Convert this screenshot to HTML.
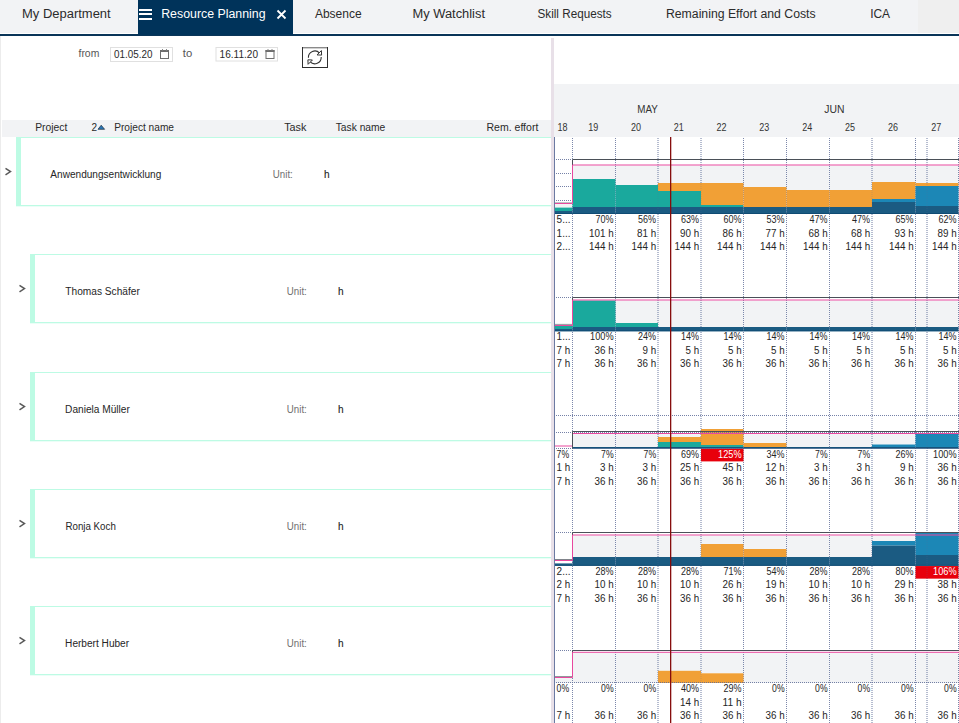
<!DOCTYPE html>
<html><head><meta charset="utf-8"><style>
html,body{margin:0;padding:0;background:#fff;width:959px;height:723px;overflow:hidden}
svg{display:block;font-family:"Liberation Sans", sans-serif}
</style></head><body>
<svg width="959" height="723" viewBox="0 0 959 723">
<rect x="0" y="0" width="959" height="33" fill="#f2f3f5" />
<rect x="918" y="0" width="41" height="33" fill="#efefef" />
<rect x="0" y="33" width="959" height="1" fill="#ffffff" />
<rect x="0" y="34" width="959" height="2" fill="#0a3558" />
<rect x="138" y="0" width="155" height="35" fill="#00335a" />
<text x="22.0" y="17.7" font-size="12" fill="#2b2b2b" textLength="88.7" lengthAdjust="spacingAndGlyphs" >My Department</text>
<text x="161.2" y="17.7" font-size="12" fill="#ffffff" textLength="104.4" lengthAdjust="spacingAndGlyphs" >Resource Planning</text>
<text x="314.9" y="17.7" font-size="12" fill="#2b2b2b" textLength="46.7" lengthAdjust="spacingAndGlyphs" >Absence</text>
<text x="412.5" y="17.7" font-size="12" fill="#2b2b2b" textLength="72.5" lengthAdjust="spacingAndGlyphs" >My Watchlist</text>
<text x="537.5" y="17.7" font-size="12" fill="#2b2b2b" textLength="74.1" lengthAdjust="spacingAndGlyphs" >Skill Requests</text>
<text x="665.95" y="17.7" font-size="12" fill="#2b2b2b" textLength="149.7" lengthAdjust="spacingAndGlyphs" >Remaining Effort and Costs</text>
<text x="870.2" y="17.7" font-size="12" fill="#2b2b2b" textLength="19.9" lengthAdjust="spacingAndGlyphs" >ICA</text>
<rect x="139" y="9" width="13" height="2" fill="#ffffff" />
<rect x="139" y="13" width="13" height="2" fill="#ffffff" />
<rect x="139" y="18" width="13" height="2" fill="#ffffff" />
<path d="M277.5 10.5 L285.5 18.5 M285.5 10.5 L277.5 18.5" stroke="#fff" stroke-width="1.8" fill="none"/>
<rect x="0" y="36" width="1" height="687" fill="#ececec" />
<text x="78.5" y="56.8" font-size="10.5" fill="#555" textLength="20.8" lengthAdjust="spacingAndGlyphs" >from</text>
<text x="182.8" y="56.8" font-size="10.5" fill="#555" textLength="9.4" lengthAdjust="spacingAndGlyphs" >to</text>
<rect x="110.5" y="47.5" width="62" height="14" fill="#fff" stroke="#e0e0e0" stroke-width="1"/>
<text x="114.1" y="57.6" font-size="10.5" fill="#2a2a2a" textLength="38.4" lengthAdjust="spacingAndGlyphs" >01.05.20</text>
<rect x="160.5" y="50.5" width="8" height="8" fill="none" stroke="#6e6e6e" stroke-width="1"/>
<rect x="160.0" y="50" width="9" height="2" fill="#6e6e6e" />
<rect x="162.0" y="49" width="1" height="1.5" fill="#8a8a8a" />
<rect x="166.0" y="49" width="1" height="1.5" fill="#8a8a8a" />
<rect x="216" y="47.5" width="61.5" height="13.5" fill="#fff" stroke="#e0e0e0" stroke-width="1"/>
<text x="219.6" y="57.6" font-size="10.5" fill="#2a2a2a" textLength="38.4" lengthAdjust="spacingAndGlyphs" >16.11.20</text>
<rect x="266.0" y="50.5" width="8" height="8" fill="none" stroke="#6e6e6e" stroke-width="1"/>
<rect x="265.5" y="50" width="9" height="2" fill="#6e6e6e" />
<rect x="267.5" y="49" width="1" height="1.5" fill="#8a8a8a" />
<rect x="271.5" y="49" width="1" height="1.5" fill="#8a8a8a" />
<rect x="302.5" y="47.5" width="25" height="20" fill="#fff" stroke="#2e2e2e" stroke-width="1"/>
<rect x="303" y="47" width="24" height="1.4" fill="#8a8a8a" />
<path d="M308.41 57.73 A6.4 6.4 0 0 1 319.56 53.12" stroke="#333" stroke-width="1.1" fill="none"/>
<path d="M321.19 57.07 A6.4 6.4 0 0 1 310.04 61.68" stroke="#333" stroke-width="1.1" fill="none"/>
<path d="M321.4 50.6 L321.6 55.1 L317.0 54.9 Z" stroke="#333" stroke-width="1" fill="#fff" stroke-linejoin="round"/>
<path d="M308.1 64.3 L307.9 59.8 L312.4 60.0 Z" stroke="#333" stroke-width="1" fill="#fff" stroke-linejoin="round"/>
<rect x="2" y="120" width="549" height="17" fill="#f2f3f5" />
<text x="35.2" y="130.8" font-size="10" fill="#2a2a2a" textLength="32.2" lengthAdjust="spacingAndGlyphs" >Project</text>
<text x="91.4" y="130.8" font-size="10" fill="#2a2a2a" >2</text>
<path d="M98 129.3 L101.2 125.2 L104.6 129.3 Z" fill="#2a78b8" stroke="#1a2a3a" stroke-width="0.7" stroke-linejoin="round"/>
<text x="114.2" y="130.8" font-size="10" fill="#2a2a2a" textLength="59.8" lengthAdjust="spacingAndGlyphs" >Project name</text>
<text x="284.2" y="130.8" font-size="10" fill="#2a2a2a" textLength="22.2" lengthAdjust="spacingAndGlyphs" >Task</text>
<text x="335.7" y="130.8" font-size="10" fill="#2a2a2a" textLength="49.6" lengthAdjust="spacingAndGlyphs" >Task name</text>
<text x="486.5" y="130.8" font-size="10" fill="#2a2a2a" textLength="51.8" lengthAdjust="spacingAndGlyphs" >Rem. effort</text>
<rect x="16" y="137" width="535" height="1" fill="#bdfbe4" />
<rect x="16" y="205" width="535" height="1.3" fill="#bdfbe4" />
<rect x="16" y="137" width="5" height="69" fill="#bdfbe4" />
<path d="M5.5 168.3 L10.5 171.6 L5.5 174.9" stroke="#5a5a5a" stroke-width="1.5" fill="none" stroke-linejoin="miter"/>
<text x="50.3" y="178.0" font-size="10" fill="#262626" textLength="111.0" lengthAdjust="spacingAndGlyphs" >Anwendungsentwicklung</text>
<text x="272.8" y="178.0" font-size="10" fill="#707070" textLength="20.0" lengthAdjust="spacingAndGlyphs" >Unit:</text>
<text x="323.9" y="178.0" font-size="10" fill="#1e1e1e" textLength="5.6" lengthAdjust="spacingAndGlyphs" stroke="#1e1e1e" stroke-width="0.12">h</text>
<rect x="30" y="254" width="521" height="1" fill="#bdfbe4" />
<rect x="30" y="322" width="521" height="1.3" fill="#bdfbe4" />
<rect x="30" y="254" width="5" height="69" fill="#bdfbe4" />
<path d="M19.5 285.3 L24.5 288.6 L19.5 291.9" stroke="#5a5a5a" stroke-width="1.5" fill="none" stroke-linejoin="miter"/>
<text x="65.3" y="295.0" font-size="10" fill="#262626" textLength="74.5" lengthAdjust="spacingAndGlyphs" >Thomas Schäfer</text>
<text x="286.8" y="295.0" font-size="10" fill="#707070" textLength="20.0" lengthAdjust="spacingAndGlyphs" >Unit:</text>
<text x="337.9" y="295.0" font-size="10" fill="#1e1e1e" textLength="5.6" lengthAdjust="spacingAndGlyphs" stroke="#1e1e1e" stroke-width="0.12">h</text>
<rect x="30" y="372" width="521" height="1" fill="#bdfbe4" />
<rect x="30" y="440" width="521" height="1.3" fill="#bdfbe4" />
<rect x="30" y="372" width="5" height="69" fill="#bdfbe4" />
<path d="M19.5 403.3 L24.5 406.6 L19.5 409.9" stroke="#5a5a5a" stroke-width="1.5" fill="none" stroke-linejoin="miter"/>
<text x="65.1" y="413.0" font-size="10" fill="#262626" textLength="64.8" lengthAdjust="spacingAndGlyphs" >Daniela Müller</text>
<text x="286.8" y="413.0" font-size="10" fill="#707070" textLength="20.0" lengthAdjust="spacingAndGlyphs" >Unit:</text>
<text x="337.9" y="413.0" font-size="10" fill="#1e1e1e" textLength="5.6" lengthAdjust="spacingAndGlyphs" stroke="#1e1e1e" stroke-width="0.12">h</text>
<rect x="30" y="489" width="521" height="1" fill="#bdfbe4" />
<rect x="30" y="557" width="521" height="1.3" fill="#bdfbe4" />
<rect x="30" y="489" width="5" height="69" fill="#bdfbe4" />
<path d="M19.5 520.3 L24.5 523.6 L19.5 526.9" stroke="#5a5a5a" stroke-width="1.5" fill="none" stroke-linejoin="miter"/>
<text x="65.5" y="530.0" font-size="10" fill="#262626" textLength="50.3" lengthAdjust="spacingAndGlyphs" >Ronja Koch</text>
<text x="286.8" y="530.0" font-size="10" fill="#707070" textLength="20.0" lengthAdjust="spacingAndGlyphs" >Unit:</text>
<text x="337.9" y="530.0" font-size="10" fill="#1e1e1e" textLength="5.6" lengthAdjust="spacingAndGlyphs" stroke="#1e1e1e" stroke-width="0.12">h</text>
<rect x="30" y="606" width="521" height="1" fill="#bdfbe4" />
<rect x="30" y="674" width="521" height="1.3" fill="#bdfbe4" />
<rect x="30" y="606" width="5" height="69" fill="#bdfbe4" />
<path d="M19.5 637.3 L24.5 640.6 L19.5 643.9" stroke="#5a5a5a" stroke-width="1.5" fill="none" stroke-linejoin="miter"/>
<text x="65.1" y="647.0" font-size="10" fill="#262626" textLength="64.0" lengthAdjust="spacingAndGlyphs" >Herbert Huber</text>
<text x="286.8" y="647.0" font-size="10" fill="#707070" textLength="20.0" lengthAdjust="spacingAndGlyphs" >Unit:</text>
<text x="337.9" y="647.0" font-size="10" fill="#1e1e1e" textLength="5.6" lengthAdjust="spacingAndGlyphs" stroke="#1e1e1e" stroke-width="0.12">h</text>
<rect x="551" y="38" width="3" height="685" fill="#e8e0e8" />
<rect x="554" y="84" width="405" height="53" fill="#f2f3f5" />
<text x="637.3" y="113.2" font-size="10" fill="#333" textLength="20.6" lengthAdjust="spacingAndGlyphs" >MAY</text>
<text x="824.3" y="113.2" font-size="10" fill="#333" textLength="20.2" lengthAdjust="spacingAndGlyphs" >JUN</text>
<text x="562.5" y="130.8" font-size="10" fill="#333" text-anchor="middle" textLength="10" lengthAdjust="spacingAndGlyphs" >18</text>
<text x="593.3" y="130.8" font-size="10" fill="#333" text-anchor="middle" textLength="10" lengthAdjust="spacingAndGlyphs" >19</text>
<text x="636.0" y="130.8" font-size="10" fill="#333" text-anchor="middle" textLength="10" lengthAdjust="spacingAndGlyphs" >20</text>
<text x="678.8" y="130.8" font-size="10" fill="#333" text-anchor="middle" textLength="10" lengthAdjust="spacingAndGlyphs" >21</text>
<text x="721.5" y="130.8" font-size="10" fill="#333" text-anchor="middle" textLength="10" lengthAdjust="spacingAndGlyphs" >22</text>
<text x="764.3" y="130.8" font-size="10" fill="#333" text-anchor="middle" textLength="10" lengthAdjust="spacingAndGlyphs" >23</text>
<text x="807.3" y="130.8" font-size="10" fill="#333" text-anchor="middle" textLength="10" lengthAdjust="spacingAndGlyphs" >24</text>
<text x="850.0" y="130.8" font-size="10" fill="#333" text-anchor="middle" textLength="10" lengthAdjust="spacingAndGlyphs" >25</text>
<text x="893.0" y="130.8" font-size="10" fill="#333" text-anchor="middle" textLength="10" lengthAdjust="spacingAndGlyphs" >26</text>
<text x="936.3" y="130.8" font-size="10" fill="#333" text-anchor="middle" textLength="10" lengthAdjust="spacingAndGlyphs" >27</text>
<rect x="555" y="204" width="17.5" height="3.6" fill="#f2f3f5" />
<rect x="572.5" y="165.5" width="43.0" height="13.5" fill="#f2f3f5" />
<rect x="615.5" y="165.5" width="42.5" height="19.5" fill="#f2f3f5" />
<rect x="658.0" y="165.5" width="43.0" height="17.5" fill="#f2f3f5" />
<rect x="701.0" y="165.5" width="42.5" height="17.5" fill="#f2f3f5" />
<rect x="743.5" y="165.5" width="43.0" height="21.5" fill="#f2f3f5" />
<rect x="786.5" y="165.5" width="43.0" height="24.5" fill="#f2f3f5" />
<rect x="829.5" y="165.5" width="42.5" height="24.5" fill="#f2f3f5" />
<rect x="872.0" y="165.5" width="43.5" height="16.5" fill="#f2f3f5" />
<rect x="915.5" y="165.5" width="43.0" height="17.5" fill="#f2f3f5" />
<rect x="615.5" y="300.5" width="42.5" height="22.5" fill="#f2f3f5" />
<rect x="658.0" y="300.5" width="43.0" height="26.5" fill="#f2f3f5" />
<rect x="701.0" y="300.5" width="42.5" height="26.5" fill="#f2f3f5" />
<rect x="743.5" y="300.5" width="43.0" height="26.5" fill="#f2f3f5" />
<rect x="786.5" y="300.5" width="43.0" height="26.5" fill="#f2f3f5" />
<rect x="829.5" y="300.5" width="42.5" height="26.5" fill="#f2f3f5" />
<rect x="872.0" y="300.5" width="43.5" height="26.5" fill="#f2f3f5" />
<rect x="915.5" y="300.5" width="43.0" height="26.5" fill="#f2f3f5" />
<rect x="572.5" y="434" width="43.0" height="13" fill="#f2f3f5" />
<rect x="615.5" y="434" width="42.5" height="13" fill="#f2f3f5" />
<rect x="658.0" y="434" width="43.0" height="3" fill="#f2f3f5" />
<rect x="743.5" y="434" width="43.0" height="9" fill="#f2f3f5" />
<rect x="786.5" y="434" width="43.0" height="13" fill="#f2f3f5" />
<rect x="829.5" y="434" width="42.5" height="13" fill="#f2f3f5" />
<rect x="872.0" y="434" width="43.5" height="10.5" fill="#f2f3f5" />
<rect x="572.5" y="535.5" width="43.0" height="21.5" fill="#f2f3f5" />
<rect x="615.5" y="535.5" width="42.5" height="21.5" fill="#f2f3f5" />
<rect x="658.0" y="535.5" width="43.0" height="21.5" fill="#f2f3f5" />
<rect x="701.0" y="535.5" width="42.5" height="8.5" fill="#f2f3f5" />
<rect x="743.5" y="535.5" width="43.0" height="13.5" fill="#f2f3f5" />
<rect x="786.5" y="535.5" width="43.0" height="21.5" fill="#f2f3f5" />
<rect x="829.5" y="535.5" width="42.5" height="21.5" fill="#f2f3f5" />
<rect x="872.0" y="535.5" width="43.5" height="5.5" fill="#f2f3f5" />
<rect x="555" y="678" width="17.5" height="5.0" fill="#f2f3f5" />
<rect x="572.5" y="652.8" width="43.0" height="30.2" fill="#f2f3f5" />
<rect x="615.5" y="652.8" width="42.5" height="30.2" fill="#f2f3f5" />
<rect x="658.0" y="652.8" width="43.0" height="18.0" fill="#f2f3f5" />
<rect x="701.0" y="652.8" width="42.5" height="20.5" fill="#f2f3f5" />
<rect x="743.5" y="652.8" width="43.0" height="30.2" fill="#f2f3f5" />
<rect x="786.5" y="652.8" width="43.0" height="30.2" fill="#f2f3f5" />
<rect x="829.5" y="652.8" width="42.5" height="30.2" fill="#f2f3f5" />
<rect x="872.0" y="652.8" width="43.5" height="30.2" fill="#f2f3f5" />
<rect x="915.5" y="652.8" width="43.0" height="30.2" fill="#f2f3f5" />
<g stroke="#5d6c98" stroke-width="1" stroke-dasharray="1 1" opacity="0.75"><line x1="572.5" y1="138" x2="572.5" y2="723"/><line x1="615.5" y1="138" x2="615.5" y2="723"/><line x1="658.0" y1="138" x2="658.0" y2="723"/><line x1="701.0" y1="138" x2="701.0" y2="723"/><line x1="743.5" y1="138" x2="743.5" y2="723"/><line x1="786.5" y1="138" x2="786.5" y2="723"/><line x1="829.5" y1="138" x2="829.5" y2="723"/><line x1="872.0" y1="138" x2="872.0" y2="723"/><line x1="915.5" y1="138" x2="915.5" y2="723"/><line x1="958.5" y1="138" x2="958.5" y2="723"/><line x1="927.0" y1="138" x2="927.0" y2="723"/></g>
<rect x="555" y="207.6" width="17.5" height="3.4" fill="#1aa99d" />
<rect x="555" y="211" width="17.5" height="3.0" fill="#1b5b82" />
<rect x="555" y="213.1" width="17.5" height="0.9" fill="#0f4a72" />
<rect x="572.5" y="179" width="43.0" height="28" fill="#1aa99d" />
<rect x="572.5" y="207" width="43.0" height="7.0" fill="#1b5b82" />
<rect x="572.5" y="213.1" width="43.0" height="0.9" fill="#0f4a72" />
<rect x="615.5" y="185" width="42.5" height="22" fill="#1aa99d" />
<rect x="615.5" y="207" width="42.5" height="7.0" fill="#1b5b82" />
<rect x="615.5" y="213.1" width="42.5" height="0.9" fill="#0f4a72" />
<rect x="658.0" y="183" width="43.0" height="8" fill="#f1a036" />
<rect x="658.0" y="191" width="43.0" height="16" fill="#1aa99d" />
<rect x="658.0" y="207" width="43.0" height="7.0" fill="#1b5b82" />
<rect x="658.0" y="213.1" width="43.0" height="0.9" fill="#0f4a72" />
<rect x="701.0" y="183" width="42.5" height="22" fill="#f1a036" />
<rect x="701.0" y="205" width="42.5" height="2" fill="#1aa99d" />
<rect x="701.0" y="207" width="42.5" height="7.0" fill="#1b5b82" />
<rect x="701.0" y="213.1" width="42.5" height="0.9" fill="#0f4a72" />
<rect x="743.5" y="187" width="43.0" height="20" fill="#f1a036" />
<rect x="743.5" y="207" width="43.0" height="7.0" fill="#1b5b82" />
<rect x="743.5" y="213.1" width="43.0" height="0.9" fill="#0f4a72" />
<rect x="786.5" y="190" width="43.0" height="17" fill="#f1a036" />
<rect x="786.5" y="207" width="43.0" height="7.0" fill="#1b5b82" />
<rect x="786.5" y="213.1" width="43.0" height="0.9" fill="#0f4a72" />
<rect x="829.5" y="190" width="42.5" height="17" fill="#f1a036" />
<rect x="829.5" y="207" width="42.5" height="7.0" fill="#1b5b82" />
<rect x="829.5" y="213.1" width="42.5" height="0.9" fill="#0f4a72" />
<rect x="872.0" y="182" width="43.5" height="17" fill="#f1a036" />
<rect x="872.0" y="199" width="43.5" height="3" fill="#1c87b6" />
<rect x="872.0" y="202" width="43.5" height="12.0" fill="#1b5b82" />
<rect x="872.0" y="213.1" width="43.5" height="0.9" fill="#0f4a72" />
<rect x="915.5" y="183" width="43.0" height="3" fill="#f1a036" />
<rect x="915.5" y="186" width="43.0" height="20" fill="#1c87b6" />
<rect x="915.5" y="206" width="43.0" height="8.0" fill="#1b5b82" />
<rect x="915.5" y="213.1" width="43.0" height="0.9" fill="#0f4a72" />
<rect x="555" y="326" width="17.5" height="3" fill="#1aa99d" />
<rect x="555" y="329" width="17.5" height="2.25" fill="#1b5b82" />
<rect x="555" y="330.35" width="17.5" height="0.9" fill="#0f4a72" />
<rect x="572.5" y="300.5" width="43.0" height="26.5" fill="#1aa99d" />
<rect x="572.5" y="327" width="43.0" height="4.25" fill="#1b5b82" />
<rect x="572.5" y="330.35" width="43.0" height="0.9" fill="#0f4a72" />
<rect x="615.5" y="323" width="42.5" height="4" fill="#1aa99d" />
<rect x="615.5" y="327" width="42.5" height="4.25" fill="#1b5b82" />
<rect x="615.5" y="330.35" width="42.5" height="0.9" fill="#0f4a72" />
<rect x="658.0" y="327" width="43.0" height="4.25" fill="#1b5b82" />
<rect x="658.0" y="330.35" width="43.0" height="0.9" fill="#0f4a72" />
<rect x="701.0" y="327" width="42.5" height="4.25" fill="#1b5b82" />
<rect x="701.0" y="330.35" width="42.5" height="0.9" fill="#0f4a72" />
<rect x="743.5" y="327" width="43.0" height="4.25" fill="#1b5b82" />
<rect x="743.5" y="330.35" width="43.0" height="0.9" fill="#0f4a72" />
<rect x="786.5" y="327" width="43.0" height="4.25" fill="#1b5b82" />
<rect x="786.5" y="330.35" width="43.0" height="0.9" fill="#0f4a72" />
<rect x="829.5" y="327" width="42.5" height="4.25" fill="#1b5b82" />
<rect x="829.5" y="330.35" width="42.5" height="0.9" fill="#0f4a72" />
<rect x="872.0" y="327" width="43.5" height="4.25" fill="#1b5b82" />
<rect x="872.0" y="330.35" width="43.5" height="0.9" fill="#0f4a72" />
<rect x="915.5" y="327" width="43.0" height="4.25" fill="#1b5b82" />
<rect x="915.5" y="330.35" width="43.0" height="0.9" fill="#0f4a72" />
<rect x="572.5" y="447" width="43.0" height="1.5" fill="#1b5b82" />
<rect x="572.5" y="447.6" width="43.0" height="0.9" fill="#0f4a72" />
<rect x="615.5" y="447" width="42.5" height="1.5" fill="#1b5b82" />
<rect x="615.5" y="447.6" width="42.5" height="0.9" fill="#0f4a72" />
<rect x="658.0" y="437" width="43.0" height="5" fill="#f1a036" />
<rect x="658.0" y="442" width="43.0" height="5" fill="#1aa99d" />
<rect x="658.0" y="447" width="43.0" height="1.5" fill="#1b5b82" />
<rect x="658.0" y="447.6" width="43.0" height="0.9" fill="#0f4a72" />
<rect x="701.0" y="429" width="42.5" height="16" fill="#f1a036" />
<rect x="701.0" y="445" width="42.5" height="2" fill="#1aa99d" />
<rect x="701.0" y="447" width="42.5" height="1.5" fill="#1b5b82" />
<rect x="701.0" y="447.6" width="42.5" height="0.9" fill="#0f4a72" />
<rect x="743.5" y="443" width="43.0" height="4" fill="#f1a036" />
<rect x="743.5" y="447" width="43.0" height="1.5" fill="#1b5b82" />
<rect x="743.5" y="447.6" width="43.0" height="0.9" fill="#0f4a72" />
<rect x="786.5" y="447" width="43.0" height="1.5" fill="#1b5b82" />
<rect x="786.5" y="447.6" width="43.0" height="0.9" fill="#0f4a72" />
<rect x="829.5" y="447" width="42.5" height="1.5" fill="#1b5b82" />
<rect x="829.5" y="447.6" width="42.5" height="0.9" fill="#0f4a72" />
<rect x="872.0" y="444.5" width="43.5" height="2.5" fill="#1c87b6" />
<rect x="872.0" y="447" width="43.5" height="1.5" fill="#1b5b82" />
<rect x="872.0" y="447.6" width="43.5" height="0.9" fill="#0f4a72" />
<rect x="915.5" y="433.5" width="43.0" height="13.5" fill="#1c87b6" />
<rect x="915.5" y="447" width="43.0" height="1.5" fill="#1b5b82" />
<rect x="915.5" y="447.6" width="43.0" height="0.9" fill="#0f4a72" />
<rect x="701.0" y="448.8" width="42.5" height="12.6" fill="#e8000c" />
<rect x="555" y="563.4" width="17.5" height="2.35" fill="#1b5b82" />
<rect x="555" y="564.85" width="17.5" height="0.9" fill="#0f4a72" />
<rect x="572.5" y="557" width="43.0" height="8.75" fill="#1b5b82" />
<rect x="572.5" y="564.85" width="43.0" height="0.9" fill="#0f4a72" />
<rect x="615.5" y="557" width="42.5" height="8.75" fill="#1b5b82" />
<rect x="615.5" y="564.85" width="42.5" height="0.9" fill="#0f4a72" />
<rect x="658.0" y="557" width="43.0" height="8.75" fill="#1b5b82" />
<rect x="658.0" y="564.85" width="43.0" height="0.9" fill="#0f4a72" />
<rect x="701.0" y="544" width="42.5" height="13" fill="#f1a036" />
<rect x="701.0" y="557" width="42.5" height="8.75" fill="#1b5b82" />
<rect x="701.0" y="564.85" width="42.5" height="0.9" fill="#0f4a72" />
<rect x="743.5" y="549" width="43.0" height="8" fill="#f1a036" />
<rect x="743.5" y="557" width="43.0" height="8.75" fill="#1b5b82" />
<rect x="743.5" y="564.85" width="43.0" height="0.9" fill="#0f4a72" />
<rect x="786.5" y="557" width="43.0" height="8.75" fill="#1b5b82" />
<rect x="786.5" y="564.85" width="43.0" height="0.9" fill="#0f4a72" />
<rect x="829.5" y="557" width="42.5" height="8.75" fill="#1b5b82" />
<rect x="829.5" y="564.85" width="42.5" height="0.9" fill="#0f4a72" />
<rect x="872.0" y="541" width="43.5" height="4.6" fill="#1c87b6" />
<rect x="872.0" y="545.6" width="43.5" height="20.15" fill="#1b5b82" />
<rect x="872.0" y="564.85" width="43.5" height="0.9" fill="#0f4a72" />
<rect x="915.5" y="532.7" width="43.0" height="22.3" fill="#1c87b6" />
<rect x="915.5" y="555" width="43.0" height="10.75" fill="#1b5b82" />
<rect x="915.5" y="564.85" width="43.0" height="0.9" fill="#0f4a72" />
<rect x="915.5" y="566.05" width="43.0" height="12.6" fill="#e8000c" />
<rect x="658.0" y="670.8" width="43.0" height="12.2" fill="#f1a036" />
<rect x="701.0" y="673.3" width="42.5" height="9.7" fill="#f1a036" />
<g stroke="#5d6c98" stroke-width="1" stroke-dasharray="1 1" opacity="0.22"><line x1="572.5" y1="138" x2="572.5" y2="723"/><line x1="615.5" y1="138" x2="615.5" y2="723"/><line x1="658.0" y1="138" x2="658.0" y2="723"/><line x1="701.0" y1="138" x2="701.0" y2="723"/><line x1="743.5" y1="138" x2="743.5" y2="723"/><line x1="786.5" y1="138" x2="786.5" y2="723"/><line x1="829.5" y1="138" x2="829.5" y2="723"/><line x1="872.0" y1="138" x2="872.0" y2="723"/><line x1="915.5" y1="138" x2="915.5" y2="723"/><line x1="958.5" y1="138" x2="958.5" y2="723"/><line x1="927.0" y1="138" x2="927.0" y2="723"/></g>
<line x1="556" y1="200.5" x2="572.0" y2="200.5" stroke="#5d6c98" stroke-width="1" stroke-dasharray="1 1" opacity="0.85"/>
<line x1="556" y1="186.5" x2="572.0" y2="186.5" stroke="#5d6c98" stroke-width="1" stroke-dasharray="1 1" opacity="0.85"/>
<line x1="556" y1="173.5" x2="572.0" y2="173.5" stroke="#5d6c98" stroke-width="1" stroke-dasharray="1 1" opacity="0.85"/>
<line x1="556" y1="159.5" x2="572.0" y2="159.5" stroke="#5d6c98" stroke-width="1" stroke-dasharray="1 1" opacity="0.85"/>
<path d="M555 202.5 H572.5" stroke="#4a5058" stroke-width="1" fill="none" opacity="0.35"/>
<path d="M572.5 202.5 V159.5 H959" stroke="#4a5058" stroke-width="1" fill="none"/>
<path d="M555 203.5 H572.5 V165.0 H959" stroke="#e8489e" stroke-width="1" fill="none"/>
<text x="556.6" y="223.0" font-size="10" fill="#262626" >5...</text>
<text x="556.6" y="236.5" font-size="10" fill="#262626" >1...</text>
<text x="556.6" y="250.0" font-size="10" fill="#262626" >2...</text>
<text x="613.6" y="223.0" font-size="10" fill="#262626" text-anchor="end" textLength="18.0" lengthAdjust="spacingAndGlyphs" >70%</text>
<text x="613.6" y="236.5" font-size="10" fill="#262626" text-anchor="end" textLength="24.6" lengthAdjust="spacingAndGlyphs" >101 h</text>
<text x="613.6" y="250.0" font-size="10" fill="#262626" text-anchor="end" textLength="24.6" lengthAdjust="spacingAndGlyphs" >144 h</text>
<text x="656.1" y="223.0" font-size="10" fill="#262626" text-anchor="end" textLength="18.0" lengthAdjust="spacingAndGlyphs" >56%</text>
<text x="656.1" y="236.5" font-size="10" fill="#262626" text-anchor="end" textLength="19.1" lengthAdjust="spacingAndGlyphs" >81 h</text>
<text x="656.1" y="250.0" font-size="10" fill="#262626" text-anchor="end" textLength="24.6" lengthAdjust="spacingAndGlyphs" >144 h</text>
<text x="699.1" y="223.0" font-size="10" fill="#262626" text-anchor="end" textLength="18.0" lengthAdjust="spacingAndGlyphs" >63%</text>
<text x="699.1" y="236.5" font-size="10" fill="#262626" text-anchor="end" textLength="19.1" lengthAdjust="spacingAndGlyphs" >90 h</text>
<text x="699.1" y="250.0" font-size="10" fill="#262626" text-anchor="end" textLength="24.6" lengthAdjust="spacingAndGlyphs" >144 h</text>
<text x="741.6" y="223.0" font-size="10" fill="#262626" text-anchor="end" textLength="18.0" lengthAdjust="spacingAndGlyphs" >60%</text>
<text x="741.6" y="236.5" font-size="10" fill="#262626" text-anchor="end" textLength="19.1" lengthAdjust="spacingAndGlyphs" >86 h</text>
<text x="741.6" y="250.0" font-size="10" fill="#262626" text-anchor="end" textLength="24.6" lengthAdjust="spacingAndGlyphs" >144 h</text>
<text x="784.6" y="223.0" font-size="10" fill="#262626" text-anchor="end" textLength="18.0" lengthAdjust="spacingAndGlyphs" >53%</text>
<text x="784.6" y="236.5" font-size="10" fill="#262626" text-anchor="end" textLength="19.1" lengthAdjust="spacingAndGlyphs" >77 h</text>
<text x="784.6" y="250.0" font-size="10" fill="#262626" text-anchor="end" textLength="24.6" lengthAdjust="spacingAndGlyphs" >144 h</text>
<text x="827.6" y="223.0" font-size="10" fill="#262626" text-anchor="end" textLength="18.0" lengthAdjust="spacingAndGlyphs" >47%</text>
<text x="827.6" y="236.5" font-size="10" fill="#262626" text-anchor="end" textLength="19.1" lengthAdjust="spacingAndGlyphs" >68 h</text>
<text x="827.6" y="250.0" font-size="10" fill="#262626" text-anchor="end" textLength="24.6" lengthAdjust="spacingAndGlyphs" >144 h</text>
<text x="870.1" y="223.0" font-size="10" fill="#262626" text-anchor="end" textLength="18.0" lengthAdjust="spacingAndGlyphs" >47%</text>
<text x="870.1" y="236.5" font-size="10" fill="#262626" text-anchor="end" textLength="19.1" lengthAdjust="spacingAndGlyphs" >68 h</text>
<text x="870.1" y="250.0" font-size="10" fill="#262626" text-anchor="end" textLength="24.6" lengthAdjust="spacingAndGlyphs" >144 h</text>
<text x="913.6" y="223.0" font-size="10" fill="#262626" text-anchor="end" textLength="18.0" lengthAdjust="spacingAndGlyphs" >65%</text>
<text x="913.6" y="236.5" font-size="10" fill="#262626" text-anchor="end" textLength="19.1" lengthAdjust="spacingAndGlyphs" >93 h</text>
<text x="913.6" y="250.0" font-size="10" fill="#262626" text-anchor="end" textLength="24.6" lengthAdjust="spacingAndGlyphs" >144 h</text>
<text x="956.6" y="223.0" font-size="10" fill="#262626" text-anchor="end" textLength="18.0" lengthAdjust="spacingAndGlyphs" >62%</text>
<text x="956.6" y="236.5" font-size="10" fill="#262626" text-anchor="end" textLength="19.1" lengthAdjust="spacingAndGlyphs" >89 h</text>
<text x="956.6" y="250.0" font-size="10" fill="#262626" text-anchor="end" textLength="24.6" lengthAdjust="spacingAndGlyphs" >144 h</text>
<line x1="556" y1="297.5" x2="572.0" y2="297.5" stroke="#5d6c98" stroke-width="1" stroke-dasharray="1 1" opacity="0.85"/>
<path d="M555 324.4 H572.5" stroke="#4a5058" stroke-width="1" fill="none" opacity="0.6"/>
<path d="M572.5 324.4 V297.5 H959" stroke="#4a5058" stroke-width="1" fill="none"/>
<path d="M555 325.5 H572.5 V300.0 H959" stroke="#e8489e" stroke-width="1" fill="none"/>
<text x="556.6" y="340.25" font-size="10" fill="#262626" >1...</text>
<text x="556.6" y="353.75" font-size="10" fill="#262626" textLength="13.6" lengthAdjust="spacingAndGlyphs" >7 h</text>
<text x="556.6" y="367.25" font-size="10" fill="#262626" textLength="13.6" lengthAdjust="spacingAndGlyphs" >7 h</text>
<text x="613.6" y="340.25" font-size="10" fill="#262626" text-anchor="end" textLength="23.5" lengthAdjust="spacingAndGlyphs" >100%</text>
<text x="613.6" y="353.75" font-size="10" fill="#262626" text-anchor="end" textLength="19.1" lengthAdjust="spacingAndGlyphs" >36 h</text>
<text x="613.6" y="367.25" font-size="10" fill="#262626" text-anchor="end" textLength="19.1" lengthAdjust="spacingAndGlyphs" >36 h</text>
<text x="656.1" y="340.25" font-size="10" fill="#262626" text-anchor="end" textLength="18.0" lengthAdjust="spacingAndGlyphs" >24%</text>
<text x="656.1" y="353.75" font-size="10" fill="#262626" text-anchor="end" textLength="13.6" lengthAdjust="spacingAndGlyphs" >9 h</text>
<text x="656.1" y="367.25" font-size="10" fill="#262626" text-anchor="end" textLength="19.1" lengthAdjust="spacingAndGlyphs" >36 h</text>
<text x="699.1" y="340.25" font-size="10" fill="#262626" text-anchor="end" textLength="18.0" lengthAdjust="spacingAndGlyphs" >14%</text>
<text x="699.1" y="353.75" font-size="10" fill="#262626" text-anchor="end" textLength="13.6" lengthAdjust="spacingAndGlyphs" >5 h</text>
<text x="699.1" y="367.25" font-size="10" fill="#262626" text-anchor="end" textLength="19.1" lengthAdjust="spacingAndGlyphs" >36 h</text>
<text x="741.6" y="340.25" font-size="10" fill="#262626" text-anchor="end" textLength="18.0" lengthAdjust="spacingAndGlyphs" >14%</text>
<text x="741.6" y="353.75" font-size="10" fill="#262626" text-anchor="end" textLength="13.6" lengthAdjust="spacingAndGlyphs" >5 h</text>
<text x="741.6" y="367.25" font-size="10" fill="#262626" text-anchor="end" textLength="19.1" lengthAdjust="spacingAndGlyphs" >36 h</text>
<text x="784.6" y="340.25" font-size="10" fill="#262626" text-anchor="end" textLength="18.0" lengthAdjust="spacingAndGlyphs" >14%</text>
<text x="784.6" y="353.75" font-size="10" fill="#262626" text-anchor="end" textLength="13.6" lengthAdjust="spacingAndGlyphs" >5 h</text>
<text x="784.6" y="367.25" font-size="10" fill="#262626" text-anchor="end" textLength="19.1" lengthAdjust="spacingAndGlyphs" >36 h</text>
<text x="827.6" y="340.25" font-size="10" fill="#262626" text-anchor="end" textLength="18.0" lengthAdjust="spacingAndGlyphs" >14%</text>
<text x="827.6" y="353.75" font-size="10" fill="#262626" text-anchor="end" textLength="13.6" lengthAdjust="spacingAndGlyphs" >5 h</text>
<text x="827.6" y="367.25" font-size="10" fill="#262626" text-anchor="end" textLength="19.1" lengthAdjust="spacingAndGlyphs" >36 h</text>
<text x="870.1" y="340.25" font-size="10" fill="#262626" text-anchor="end" textLength="18.0" lengthAdjust="spacingAndGlyphs" >14%</text>
<text x="870.1" y="353.75" font-size="10" fill="#262626" text-anchor="end" textLength="13.6" lengthAdjust="spacingAndGlyphs" >5 h</text>
<text x="870.1" y="367.25" font-size="10" fill="#262626" text-anchor="end" textLength="19.1" lengthAdjust="spacingAndGlyphs" >36 h</text>
<text x="913.6" y="340.25" font-size="10" fill="#262626" text-anchor="end" textLength="18.0" lengthAdjust="spacingAndGlyphs" >14%</text>
<text x="913.6" y="353.75" font-size="10" fill="#262626" text-anchor="end" textLength="13.6" lengthAdjust="spacingAndGlyphs" >5 h</text>
<text x="913.6" y="367.25" font-size="10" fill="#262626" text-anchor="end" textLength="19.1" lengthAdjust="spacingAndGlyphs" >36 h</text>
<text x="956.6" y="340.25" font-size="10" fill="#262626" text-anchor="end" textLength="18.0" lengthAdjust="spacingAndGlyphs" >14%</text>
<text x="956.6" y="353.75" font-size="10" fill="#262626" text-anchor="end" textLength="13.6" lengthAdjust="spacingAndGlyphs" >5 h</text>
<text x="956.6" y="367.25" font-size="10" fill="#262626" text-anchor="end" textLength="19.1" lengthAdjust="spacingAndGlyphs" >36 h</text>
<line x1="556" y1="415.5" x2="959" y2="415.5" stroke="#5d6c98" stroke-width="1" stroke-dasharray="1 1" opacity="0.85"/>
<line x1="556" y1="432.5" x2="959" y2="432.5" stroke="#5d6c98" stroke-width="1" stroke-dasharray="1 1" opacity="0.85"/>
<line x1="556" y1="448.5" x2="959" y2="448.5" stroke="#5d6c98" stroke-width="1" stroke-dasharray="1 1" opacity="0.85"/>
<path d="M572.5 446.0 V431.5 H959" stroke="#4a5058" stroke-width="1" fill="none"/>
<path d="M555 446.0 H572.5 V433.5 H959" stroke="#e8489e" stroke-width="1" fill="none"/>
<path d="M572.5 448.5 V431.5" stroke="#4a5058" stroke-width="1" fill="none"/>
<text x="556.6" y="457.5" font-size="10" fill="#262626" textLength="12.5" lengthAdjust="spacingAndGlyphs" >7%</text>
<text x="556.6" y="471.0" font-size="10" fill="#262626" textLength="13.6" lengthAdjust="spacingAndGlyphs" >1 h</text>
<text x="556.6" y="484.5" font-size="10" fill="#262626" textLength="13.6" lengthAdjust="spacingAndGlyphs" >7 h</text>
<text x="613.6" y="457.5" font-size="10" fill="#262626" text-anchor="end" textLength="12.5" lengthAdjust="spacingAndGlyphs" >7%</text>
<text x="613.6" y="471.0" font-size="10" fill="#262626" text-anchor="end" textLength="13.6" lengthAdjust="spacingAndGlyphs" >3 h</text>
<text x="613.6" y="484.5" font-size="10" fill="#262626" text-anchor="end" textLength="19.1" lengthAdjust="spacingAndGlyphs" >36 h</text>
<text x="656.1" y="457.5" font-size="10" fill="#262626" text-anchor="end" textLength="12.5" lengthAdjust="spacingAndGlyphs" >7%</text>
<text x="656.1" y="471.0" font-size="10" fill="#262626" text-anchor="end" textLength="13.6" lengthAdjust="spacingAndGlyphs" >3 h</text>
<text x="656.1" y="484.5" font-size="10" fill="#262626" text-anchor="end" textLength="19.1" lengthAdjust="spacingAndGlyphs" >36 h</text>
<text x="699.1" y="457.5" font-size="10" fill="#262626" text-anchor="end" textLength="18.0" lengthAdjust="spacingAndGlyphs" >69%</text>
<text x="699.1" y="471.0" font-size="10" fill="#262626" text-anchor="end" textLength="19.1" lengthAdjust="spacingAndGlyphs" >25 h</text>
<text x="699.1" y="484.5" font-size="10" fill="#262626" text-anchor="end" textLength="19.1" lengthAdjust="spacingAndGlyphs" >36 h</text>
<text x="741.6" y="457.5" font-size="10" fill="#ffffff" text-anchor="end" textLength="23.5" lengthAdjust="spacingAndGlyphs" >125%</text>
<text x="741.6" y="471.0" font-size="10" fill="#262626" text-anchor="end" textLength="19.1" lengthAdjust="spacingAndGlyphs" >45 h</text>
<text x="741.6" y="484.5" font-size="10" fill="#262626" text-anchor="end" textLength="19.1" lengthAdjust="spacingAndGlyphs" >36 h</text>
<text x="784.6" y="457.5" font-size="10" fill="#262626" text-anchor="end" textLength="18.0" lengthAdjust="spacingAndGlyphs" >34%</text>
<text x="784.6" y="471.0" font-size="10" fill="#262626" text-anchor="end" textLength="19.1" lengthAdjust="spacingAndGlyphs" >12 h</text>
<text x="784.6" y="484.5" font-size="10" fill="#262626" text-anchor="end" textLength="19.1" lengthAdjust="spacingAndGlyphs" >36 h</text>
<text x="827.6" y="457.5" font-size="10" fill="#262626" text-anchor="end" textLength="12.5" lengthAdjust="spacingAndGlyphs" >7%</text>
<text x="827.6" y="471.0" font-size="10" fill="#262626" text-anchor="end" textLength="13.6" lengthAdjust="spacingAndGlyphs" >3 h</text>
<text x="827.6" y="484.5" font-size="10" fill="#262626" text-anchor="end" textLength="19.1" lengthAdjust="spacingAndGlyphs" >36 h</text>
<text x="870.1" y="457.5" font-size="10" fill="#262626" text-anchor="end" textLength="12.5" lengthAdjust="spacingAndGlyphs" >7%</text>
<text x="870.1" y="471.0" font-size="10" fill="#262626" text-anchor="end" textLength="13.6" lengthAdjust="spacingAndGlyphs" >3 h</text>
<text x="870.1" y="484.5" font-size="10" fill="#262626" text-anchor="end" textLength="19.1" lengthAdjust="spacingAndGlyphs" >36 h</text>
<text x="913.6" y="457.5" font-size="10" fill="#262626" text-anchor="end" textLength="18.0" lengthAdjust="spacingAndGlyphs" >26%</text>
<text x="913.6" y="471.0" font-size="10" fill="#262626" text-anchor="end" textLength="13.6" lengthAdjust="spacingAndGlyphs" >9 h</text>
<text x="913.6" y="484.5" font-size="10" fill="#262626" text-anchor="end" textLength="19.1" lengthAdjust="spacingAndGlyphs" >36 h</text>
<text x="956.6" y="457.5" font-size="10" fill="#262626" text-anchor="end" textLength="23.5" lengthAdjust="spacingAndGlyphs" >100%</text>
<text x="956.6" y="471.0" font-size="10" fill="#262626" text-anchor="end" textLength="19.1" lengthAdjust="spacingAndGlyphs" >36 h</text>
<text x="956.6" y="484.5" font-size="10" fill="#262626" text-anchor="end" textLength="19.1" lengthAdjust="spacingAndGlyphs" >36 h</text>
<line x1="556" y1="532.5" x2="572.0" y2="532.5" stroke="#5d6c98" stroke-width="1" stroke-dasharray="1 1" opacity="0.85"/>
<path d="M555 559.5 H572.5" stroke="#4a5058" stroke-width="1" fill="none" opacity="0.7"/>
<path d="M572.5 559.5 V532.5 H959" stroke="#4a5058" stroke-width="1" fill="none"/>
<path d="M555 560.5 H572.5 V535.0 H959" stroke="#e8489e" stroke-width="1" fill="none"/>
<text x="556.6" y="574.75" font-size="10" fill="#262626" >2...</text>
<text x="556.6" y="588.25" font-size="10" fill="#262626" textLength="13.6" lengthAdjust="spacingAndGlyphs" >2 h</text>
<text x="556.6" y="601.75" font-size="10" fill="#262626" textLength="13.6" lengthAdjust="spacingAndGlyphs" >7 h</text>
<text x="613.6" y="574.75" font-size="10" fill="#262626" text-anchor="end" textLength="18.0" lengthAdjust="spacingAndGlyphs" >28%</text>
<text x="613.6" y="588.25" font-size="10" fill="#262626" text-anchor="end" textLength="19.1" lengthAdjust="spacingAndGlyphs" >10 h</text>
<text x="613.6" y="601.75" font-size="10" fill="#262626" text-anchor="end" textLength="19.1" lengthAdjust="spacingAndGlyphs" >36 h</text>
<text x="656.1" y="574.75" font-size="10" fill="#262626" text-anchor="end" textLength="18.0" lengthAdjust="spacingAndGlyphs" >28%</text>
<text x="656.1" y="588.25" font-size="10" fill="#262626" text-anchor="end" textLength="19.1" lengthAdjust="spacingAndGlyphs" >10 h</text>
<text x="656.1" y="601.75" font-size="10" fill="#262626" text-anchor="end" textLength="19.1" lengthAdjust="spacingAndGlyphs" >36 h</text>
<text x="699.1" y="574.75" font-size="10" fill="#262626" text-anchor="end" textLength="18.0" lengthAdjust="spacingAndGlyphs" >28%</text>
<text x="699.1" y="588.25" font-size="10" fill="#262626" text-anchor="end" textLength="19.1" lengthAdjust="spacingAndGlyphs" >10 h</text>
<text x="699.1" y="601.75" font-size="10" fill="#262626" text-anchor="end" textLength="19.1" lengthAdjust="spacingAndGlyphs" >36 h</text>
<text x="741.6" y="574.75" font-size="10" fill="#262626" text-anchor="end" textLength="18.0" lengthAdjust="spacingAndGlyphs" >71%</text>
<text x="741.6" y="588.25" font-size="10" fill="#262626" text-anchor="end" textLength="19.1" lengthAdjust="spacingAndGlyphs" >26 h</text>
<text x="741.6" y="601.75" font-size="10" fill="#262626" text-anchor="end" textLength="19.1" lengthAdjust="spacingAndGlyphs" >36 h</text>
<text x="784.6" y="574.75" font-size="10" fill="#262626" text-anchor="end" textLength="18.0" lengthAdjust="spacingAndGlyphs" >54%</text>
<text x="784.6" y="588.25" font-size="10" fill="#262626" text-anchor="end" textLength="19.1" lengthAdjust="spacingAndGlyphs" >19 h</text>
<text x="784.6" y="601.75" font-size="10" fill="#262626" text-anchor="end" textLength="19.1" lengthAdjust="spacingAndGlyphs" >36 h</text>
<text x="827.6" y="574.75" font-size="10" fill="#262626" text-anchor="end" textLength="18.0" lengthAdjust="spacingAndGlyphs" >28%</text>
<text x="827.6" y="588.25" font-size="10" fill="#262626" text-anchor="end" textLength="19.1" lengthAdjust="spacingAndGlyphs" >10 h</text>
<text x="827.6" y="601.75" font-size="10" fill="#262626" text-anchor="end" textLength="19.1" lengthAdjust="spacingAndGlyphs" >36 h</text>
<text x="870.1" y="574.75" font-size="10" fill="#262626" text-anchor="end" textLength="18.0" lengthAdjust="spacingAndGlyphs" >28%</text>
<text x="870.1" y="588.25" font-size="10" fill="#262626" text-anchor="end" textLength="19.1" lengthAdjust="spacingAndGlyphs" >10 h</text>
<text x="870.1" y="601.75" font-size="10" fill="#262626" text-anchor="end" textLength="19.1" lengthAdjust="spacingAndGlyphs" >36 h</text>
<text x="913.6" y="574.75" font-size="10" fill="#262626" text-anchor="end" textLength="18.0" lengthAdjust="spacingAndGlyphs" >80%</text>
<text x="913.6" y="588.25" font-size="10" fill="#262626" text-anchor="end" textLength="19.1" lengthAdjust="spacingAndGlyphs" >29 h</text>
<text x="913.6" y="601.75" font-size="10" fill="#262626" text-anchor="end" textLength="19.1" lengthAdjust="spacingAndGlyphs" >36 h</text>
<text x="956.6" y="574.75" font-size="10" fill="#ffffff" text-anchor="end" textLength="23.5" lengthAdjust="spacingAndGlyphs" >106%</text>
<text x="956.6" y="588.25" font-size="10" fill="#262626" text-anchor="end" textLength="19.1" lengthAdjust="spacingAndGlyphs" >38 h</text>
<text x="956.6" y="601.75" font-size="10" fill="#262626" text-anchor="end" textLength="19.1" lengthAdjust="spacingAndGlyphs" >36 h</text>
<line x1="556" y1="650.5" x2="572.0" y2="650.5" stroke="#5d6c98" stroke-width="1" stroke-dasharray="1 1" opacity="0.85"/>
<line x1="556" y1="682.5" x2="959" y2="682.5" stroke="#5d6c98" stroke-width="1" stroke-dasharray="1 1" opacity="0.85"/>
<path d="M555 676.5 H572.5" stroke="#4a5058" stroke-width="1" fill="none" opacity="0.6"/>
<path d="M572.5 676.5 V650.5 H959" stroke="#4a5058" stroke-width="1" fill="none"/>
<path d="M555 677.5 H572.5 V652.3 H959" stroke="#e8489e" stroke-width="1" fill="none"/>
<text x="556.6" y="692.0" font-size="10" fill="#262626" textLength="12.5" lengthAdjust="spacingAndGlyphs" >0%</text>
<text x="556.6" y="719.0" font-size="10" fill="#262626" textLength="13.6" lengthAdjust="spacingAndGlyphs" >7 h</text>
<text x="613.6" y="692.0" font-size="10" fill="#262626" text-anchor="end" textLength="12.5" lengthAdjust="spacingAndGlyphs" >0%</text>
<text x="613.6" y="719.0" font-size="10" fill="#262626" text-anchor="end" textLength="19.1" lengthAdjust="spacingAndGlyphs" >36 h</text>
<text x="656.1" y="692.0" font-size="10" fill="#262626" text-anchor="end" textLength="12.5" lengthAdjust="spacingAndGlyphs" >0%</text>
<text x="656.1" y="719.0" font-size="10" fill="#262626" text-anchor="end" textLength="19.1" lengthAdjust="spacingAndGlyphs" >36 h</text>
<text x="699.1" y="692.0" font-size="10" fill="#262626" text-anchor="end" textLength="18.0" lengthAdjust="spacingAndGlyphs" >40%</text>
<text x="699.1" y="705.5" font-size="10" fill="#262626" text-anchor="end" textLength="19.1" lengthAdjust="spacingAndGlyphs" >14 h</text>
<text x="699.1" y="719.0" font-size="10" fill="#262626" text-anchor="end" textLength="19.1" lengthAdjust="spacingAndGlyphs" >36 h</text>
<text x="741.6" y="692.0" font-size="10" fill="#262626" text-anchor="end" textLength="18.0" lengthAdjust="spacingAndGlyphs" >29%</text>
<text x="741.6" y="705.5" font-size="10" fill="#262626" text-anchor="end" textLength="19.1" lengthAdjust="spacingAndGlyphs" >11 h</text>
<text x="741.6" y="719.0" font-size="10" fill="#262626" text-anchor="end" textLength="19.1" lengthAdjust="spacingAndGlyphs" >36 h</text>
<text x="784.6" y="692.0" font-size="10" fill="#262626" text-anchor="end" textLength="12.5" lengthAdjust="spacingAndGlyphs" >0%</text>
<text x="784.6" y="719.0" font-size="10" fill="#262626" text-anchor="end" textLength="19.1" lengthAdjust="spacingAndGlyphs" >36 h</text>
<text x="827.6" y="692.0" font-size="10" fill="#262626" text-anchor="end" textLength="12.5" lengthAdjust="spacingAndGlyphs" >0%</text>
<text x="827.6" y="719.0" font-size="10" fill="#262626" text-anchor="end" textLength="19.1" lengthAdjust="spacingAndGlyphs" >36 h</text>
<text x="870.1" y="692.0" font-size="10" fill="#262626" text-anchor="end" textLength="12.5" lengthAdjust="spacingAndGlyphs" >0%</text>
<text x="870.1" y="719.0" font-size="10" fill="#262626" text-anchor="end" textLength="19.1" lengthAdjust="spacingAndGlyphs" >36 h</text>
<text x="913.6" y="692.0" font-size="10" fill="#262626" text-anchor="end" textLength="12.5" lengthAdjust="spacingAndGlyphs" >0%</text>
<text x="913.6" y="719.0" font-size="10" fill="#262626" text-anchor="end" textLength="19.1" lengthAdjust="spacingAndGlyphs" >36 h</text>
<text x="956.6" y="692.0" font-size="10" fill="#262626" text-anchor="end" textLength="12.5" lengthAdjust="spacingAndGlyphs" >0%</text>
<text x="956.6" y="719.0" font-size="10" fill="#262626" text-anchor="end" textLength="19.1" lengthAdjust="spacingAndGlyphs" >36 h</text>
<rect x="554" y="137" width="1" height="586" fill="#6b7aa2"/>
<rect x="670" y="137" width="1.3" height="586" fill="#860d0d" />
</svg>
</body></html>
